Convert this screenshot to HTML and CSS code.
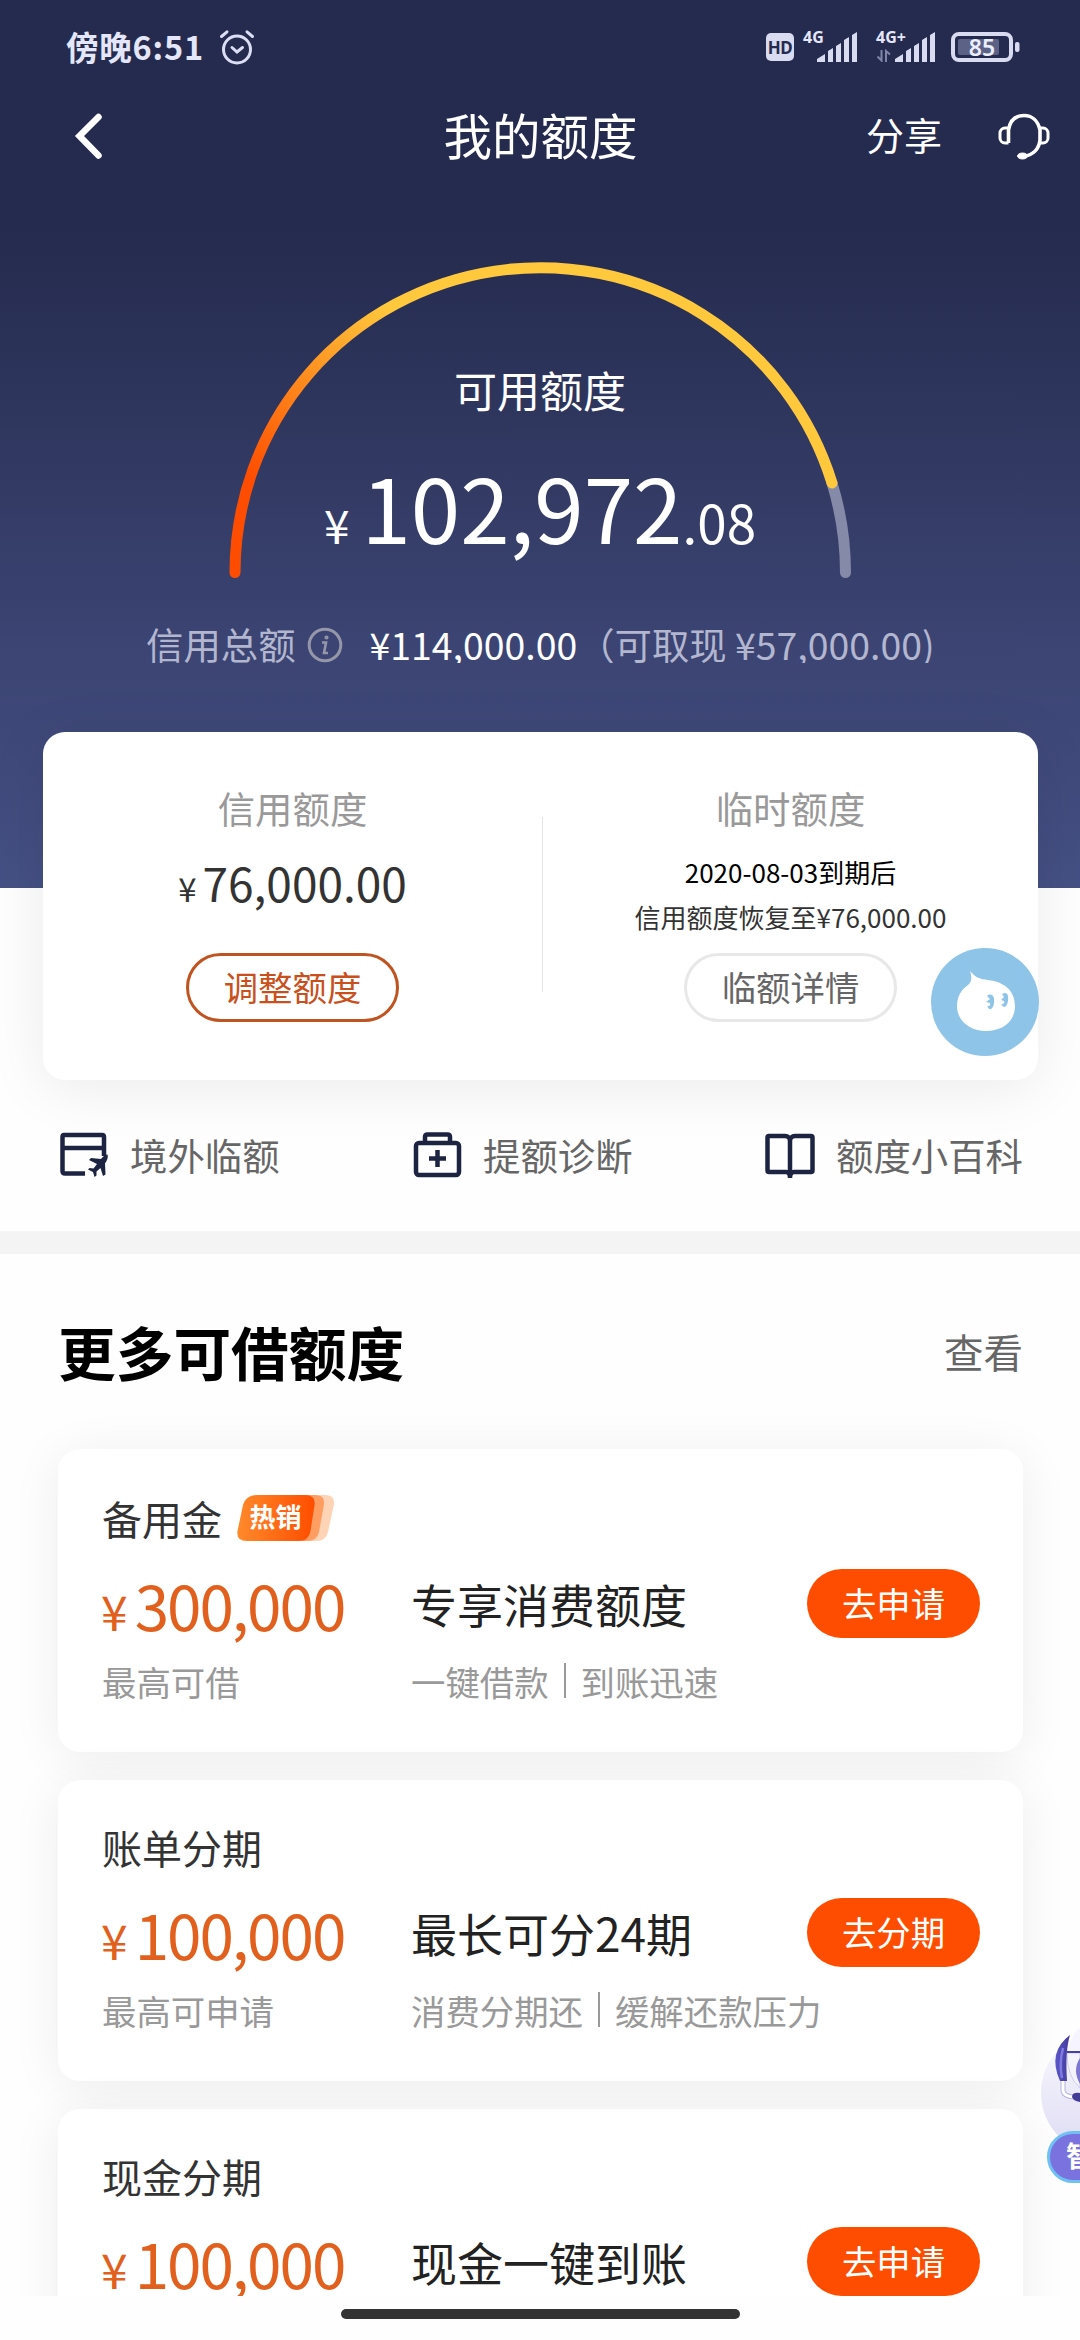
FILE: index.html
```html
<!DOCTYPE html>
<html lang="zh-CN">
<head>
<meta charset="utf-8">
<title>我的额度</title>
<link rel="stylesheet" href="styles.css">
</head>
<body>
<div class="screen">
  <header class="hero">
    <div class="status">
      <div class="status-left">
        <span class="clock">傍晚6:51</span>
        <svg class="alarm" width="36" height="36" viewBox="0 0 36 36" fill="none" stroke="#dcdef3" stroke-width="3" stroke-linecap="round">
          <circle cx="18" cy="20.500" r="13.500"/><path d="M13 18.500l5 4.500 5.500-4.500M2.500 7.500L8 2.800M33.500 7.500L28 2.800"/>
        </svg>
      </div>
      <div class="status-right">
        <span class="hd">HD</span>
        <span class="signal signal-one"><span class="net">4G</span>
          <svg width="55" height="30" viewBox="0 0 55 30" fill="#d9dbf0"><path d="M14 30v-3l8-5v8zM25 30V19l5-3v14zM33 30V14l5-3v19zM41 30V8l5-3v25zM49 30V3l5-3v30z"/></svg>
        </span>
        <span class="signal signal-two"><span class="net">4G+</span>
          <svg width="60" height="30" viewBox="0 0 60 30" fill="#d9dbf0"><path d="M19 30v-3l8-5v8zM30 30V19l5-3v14zM38 30V14l5-3v19zM46 30V8l5-3v25zM54 30V3l5-3v30z"/><path d="M5.500 18v10.500l-4-4M10 30V19l4 3.500" fill="none" stroke="#8085a8" stroke-width="2"/></svg>
        </span>
        <svg class="battery" width="70" height="30" viewBox="0 0 70 30">
          <rect x="2" y="2" width="58" height="26" rx="6" fill="none" stroke="#d9dbf0" stroke-width="4"/>
          <rect x="7" y="7" width="41" height="16" rx="2" fill="#5c6285"/>
          <rect x="64" y="10" width="4.500" height="10" rx="2" fill="#d9dbf0"/>
          <text x="31" y="23.500" text-anchor="middle">85</text>
        </svg>
      </div>
    </div>
    <nav class="nav">
      <svg class="back" width="30" height="46" viewBox="0 0 30 46" fill="none" stroke="#fff" stroke-width="6.500" stroke-linecap="round" stroke-linejoin="miter"><path d="M24.500 4L5.500 23l19 19.500"/></svg>
      <h1 class="nav-title">我的额度</h1>
      <div class="nav-actions">
        <span class="share">分享</span>
        <svg width="52" height="48" viewBox="0 0 52 48" fill="none" stroke="#fff" stroke-width="3" stroke-linejoin="round">
          <path d="M10.500 31V18C12 8 18 3.500 26 3.500S40 9 42 18v10c-1 9-7 15-16 16.500" stroke-width="3.600"/>
          <path d="M10.500 16H7a5 5 0 0 0-5 5v5a5 5 0 0 0 5 5h3.500M42.500 16H45a5 5 0 0 1 5 5v5a5 5 0 0 1-5 5h-3.500"/>
          <ellipse cx="24.500" cy="44" rx="5" ry="3" fill="#fff" stroke-width="1"/>
        </svg>
      </div>
    </nav>
    <section class="gauge">
      <svg class="gauge-arc" width="622" height="317" viewBox="229 262 622 317" fill="none" stroke-width="11" stroke-linecap="round">
        <defs><linearGradient id="arc" gradientUnits="userSpaceOnUse" x1="255" y1="480" x2="378" y2="300"><stop offset="0" stop-color="#ff4d00"/><stop offset="1" stop-color="#ffc83d"/></linearGradient></defs>
        <path d="M832 483A305.250 305 0 0 1 845.500 572.500" stroke="#858aa9"/>
        <path d="M235 572.500A305.250 305 0 0 1 832 483" stroke="url(#arc)"/>
      </svg>
      <div class="gauge-text">
        <div class="gauge-label">可用额度</div>
        <div class="gauge-amount"><span class="cur">¥</span><span class="int">102,972</span><span class="dec">.08</span></div>
      </div>
    </section>
    <div class="totals">
      <span>信用总额</span>
      <svg class="info" width="36" height="36" viewBox="0 0 36 36" fill="none" stroke="#9597a9" stroke-width="3"><circle cx="18" cy="18" r="15.800"/><path d="M15 15.500h4l-2 10.500h4" stroke-width="2.600"/><circle cx="19.500" cy="10.500" r="1.200" stroke-width="1.800"/></svg>
      <span class="total-value">¥114,000.00</span>
      <span class="cash">（可取现 ¥57,000.00)</span>
    </div>
  </header>

  <section class="limits">
    <div class="limit">
      <div class="limit-title">信用额度</div>
      <div class="limit-amount"><span class="cur">¥</span>76,000.00</div>
      <div class="pill pill-accent">调整额度</div>
    </div>
    <div class="rule"></div>
    <div class="limit">
      <div class="limit-title">临时额度</div>
      <div class="limit-note"><div class="due">2020-08-03到期后</div><div>信用额度恢复至¥76,000.00</div></div>
      <div class="pill">临额详情</div>
    </div>
  </section>

  <section class="links">
    <div class="link">
      <svg width="49" height="46" viewBox="0 0 49 46" fill="none" stroke="#1d2442" stroke-width="4.500"><path d="M44 24V5q0-2-2-2H4Q2.500 3 2.500 5v34q0 2.500 2.500 2.500H25M2 16h42"/><path d="M47.500 22.500c-2 0-4.500 2-6.500 4.500l-10-1-2 2 8 4-3.500 4.500-4-.5-1.500 1.500 5 2.500 1.500 5 2-1.500v-4l4-3.500 2.500 8 2.500-1.500-.5-11c2-3 3.500-6 2.500-9z" fill="#1d2442" stroke="none"/></svg>
      <span>境外临额</span>
    </div>
    <div class="link">
      <svg width="49" height="46" viewBox="0 0 49 46" fill="none" stroke="#1d2442" stroke-width="4.500"><rect x="3" y="11" width="43" height="32" rx="3"/><path d="M12 11V5q0-2.500 2.500-2.500h20Q37 2.500 37 5v6M24.500 18v17M16 26.500h17"/></svg>
      <span>提额诊断</span>
    </div>
    <div class="link">
      <svg width="50" height="46" viewBox="0 0 50 46" fill="none" stroke="#1d2442" stroke-width="4.500" stroke-linejoin="round"><path d="M25 9c0-3-2-5-5-5H4Q2.500 4 2.500 5.500v33Q2.500 40 4 40h17c3 0 4 2 4 6V9c0-3 2-5 5-5h16q1.500 0 1.500 1.500v33q0 1.500-1.500 1.500H29c-3 0-4 2-4 6"/></svg>
      <span>额度小百科</span>
    </div>
  </section>

  <div class="band"></div>

  <section class="more">
    <div class="more-head"><h2>更多可借额度</h2><span>查看</span></div>
    <article class="offer offer-first">
      <div class="offer-name">备用金
        <svg class="hot" width="98" height="46" viewBox="0 0 98 46">
          <defs><linearGradient id="hot"><stop offset="0" stop-color="#ff8a2b"/><stop offset="1" stop-color="#ff4d00"/></linearGradient></defs>
          <path d="M32 0h56q10 0 9 9l-6 28q-2 9-12 9H26z" fill="#ffd3b5"/>
          <path d="M24 0h54q10 0 9 9l-5 28q-2 9-12 9H18z" fill="#ff9e62"/>
          <path d="M20 0h48q11 0 9.500 10l-4 26q-1.500 10-12 10H10Q-1 46 .500 36L6 10Q9 0 20 0z" fill="url(#hot)"/>
          <text x="38.500" y="31.500" text-anchor="middle">热销</text>
        </svg>
      </div>
      <div class="offer-amount"><span class="cur">¥</span>300,000</div>
      <div class="offer-lead">专享消费额度</div>
      <div class="offer-btn">去申请</div>
      <div class="offer-sub">最高可借</div>
      <div class="offer-tags"><span>一键借款</span><span>到账迅速</span></div>
    </article>
    <article class="offer">
      <div class="offer-name">账单分期</div>
      <div class="offer-amount"><span class="cur">¥</span>100,000</div>
      <div class="offer-lead">最长可分24期</div>
      <div class="offer-btn">去分期</div>
      <div class="offer-sub">最高可申请</div>
      <div class="offer-tags"><span>消费分期还</span><span>缓解还款压力</span></div>
    </article>
    <article class="offer">
      <div class="offer-name">现金分期</div>
      <div class="offer-amount"><span class="cur">¥</span>100,000</div>
      <div class="offer-lead">现金一键到账</div>
      <div class="offer-btn">去申请</div>
    </article>
  </section>

  <footer class="home"><div class="home-bar"></div></footer>

  <svg class="pet" width="108" height="108" viewBox="0 0 108 108">
    <circle cx="54" cy="54" r="54" fill="#8ec4e7"/>
    <path d="M39 23c6 7 10 8 18 9 17 2 27 11 27 26 0 16-13 25-29 25S26 73 26 58c0-10 5-17 11-21 4-3 4-8 2-14z" fill="#fff"/>
    <path d="M56 48c5-4 8 1 7 7-1 7-5 8-7 3 2 1 4-1 3-3l-4-1 4-3zM71 46c5-3 7 1 6 7-1 6-4 8-7 3 2 1 4-1 3-3l-3-1 3-3z" fill="#8ec4e7"/>
  </svg>

  <div class="bot">
    <svg width="39" height="130" viewBox="0 0 39 130">
      <defs>
        <linearGradient id="halo" x1="0" y1="0" x2="0" y2="1"><stop offset="0" stop-color="#faf9fe"/><stop offset="1" stop-color="#dddbf3"/></linearGradient>
        <linearGradient id="ear"><stop offset="0" stop-color="#5a55cc"/><stop offset="1" stop-color="#423b98"/></linearGradient>
      </defs>
      <circle cx="62" cy="77" r="62" fill="url(#halo)"/>
      <path d="M39 12Q30 18 27 36l12 1z" fill="#f6f4ff"/>
      <path d="M26 37h13v35Q26 61 26 37z" fill="#f4f2fd" stroke="#cfcbee" stroke-width="1"/>
      <path d="M39 42q-8 12 0 26z" fill="#7b77d2"/>
      <path d="M29 19Q24 35 26 65h-7Q6 36 29 19z" fill="url(#ear)"/>
      <path d="M22 32q-4 16-1 30" fill="none" stroke="#817be0" stroke-width="2.500"/>
      <path d="M26 36h13" stroke="#4740a5" stroke-width="2"/>
      <path d="M22 65v10q1 5 10 6" fill="none" stroke="#b6b2df" stroke-width="5"/>
      <path d="M22 65v10q1 5 10 6" fill="none" stroke="#fff" stroke-width="3"/>
      <path d="M39 77q-8-1-8 4 1 4 8 5z" fill="#423b98"/>
    </svg>
    <div class="bot-label">智</div>
  </div>
</div>
</body>
</html>
```
FILE: styles.css
```css
* { box-sizing: border-box; }

body {
  margin: 0;
  background: #fefefe;
  font-family: "Noto Sans CJK SC", "Noto Sans", sans-serif;
  font-weight: 400;
  color: #333;
}

h1, h2 { margin: 0; }

.screen {
  position: relative;
  width: 1080px;
  height: 2340px;
  overflow: hidden;
  display: flex;
  flex-direction: column;
}

.screen svg { flex: none; display: block; }

/* Hero */
.hero {
  flex: none;
  height: 888px;
  background: linear-gradient(#252b4e 0, #252b4e 230px, #3b4472 640px, #455084 888px);
  color: #fff;
}

.status {
  display: flex;
  justify-content: space-between;
  height: 94px;
  padding: 0 59px 0 66px;
}

.status-left { display: flex; align-items: center; gap: 15px; }

.clock {
  margin-top: -2px;
  font-size: 32.500px;
  font-weight: 700;
  line-height: 40px;
  letter-spacing: 0.8px;
  color: #e4e6fa;
}

.status-right { display: flex; align-items: center; }

.hd {
  width: 28px;
  height: 28px;
  border-radius: 5px;
  background: #d9dbf0;
  color: #252b4e;
  font: 700 17px/30px "Noto Sans", sans-serif;
  text-align: center;
  letter-spacing: -0.5px;
}

.signal { display: grid; height: 30px; }
.signal > * { grid-area: 1 / 1; }
.signal-one { margin-left: 9px; }
.signal-two { margin-left: 18px; }
.net {
  margin-top: -3px;
  font: 700 16px/16px "Noto Sans", sans-serif;
  color: #e4e6fa;
}
.battery { margin-left: 15px; overflow: visible; }
.battery text { font: 600 23px "Noto Sans", sans-serif; fill: #eceefc; }

.nav {
  display: grid;
  grid-template-columns: 1fr auto 1fr;
  align-items: center;
  height: 84px;
  padding: 0 30px 0 74px;
}
.nav-title {
  margin: -4px 0 0 -43px;
  font-size: 48.500px;
  font-weight: 400;
  line-height: 64px;
}
.nav-actions { display: flex; justify-content: flex-end; align-items: center; gap: 56px; }
.share { font-size: 38px; line-height: 50px; margin-top: -4px; }

.gauge { display: grid; justify-content: center; margin-top: 84px; height: 316px; }
.gauge > * { grid-area: 1 / 1; }
.gauge-arc { overflow: visible; }
.gauge-text { padding-top: 97px; text-align: center; }
.gauge-label { font-size: 43px; line-height: 60px; }
.gauge-amount {
  display: flex;
  align-items: baseline;
  justify-content: center;
  margin-top: 37px;
  line-height: 100px;
}
.gauge-amount .cur { font-size: 46px; margin-right: 12px; }
.gauge-amount .int { font-size: 89px; }
.gauge-amount .dec { font-size: 53px; }

.totals {
  display: flex;
  height: 43px;
  margin: 42px 0 0 146px;
  overflow: hidden;
  font-size: 37.400px;
  line-height: 48px;
  color: #b3b6cf;
  white-space: pre;
}
.info { margin: 7px 0 0 11px; }
.total-value { margin-left: 27px; color: #fff; }
.cash { margin-left: 0; }

/* Limit summary */
.limits {
  position: relative;
  flex: none;
  display: grid;
  grid-template-columns: 499px 1px 1fr;
  width: 995px;
  height: 348px;
  margin: -156px 0 0 43px;
  padding-top: 51px;
  border-radius: 22px;
  background: #fff;
  box-shadow: 0 8px 60px rgba(0, 0, 0, 0.08);
}
.limit { display: flex; flex-direction: column; align-items: center; }
.limit-title { font-size: 37.400px; line-height: 50px; color: #999; }
.limit-amount { height: 60px; margin-top: 19px; font-size: 46px; line-height: 60px; }
.limit-amount .cur { font-size: 33px; line-height: 1; margin-right: 6px; }
.limit-note { margin: 16px 0 14px; font-size: 26px; line-height: 45px; text-align: center; }
.due { color: #000; }
.pill {
  width: 213px;
  height: 69px;
  border: 3px solid #e8e8e8;
  border-radius: 35px;
  font-size: 34.400px;
  line-height: 61px;
  text-align: center;
  color: #666;
}
.pill-accent { margin-top: 41px; border-color: #c05420; color: #c9501c; }
.rule { height: 175px; margin-top: 34px; background: #e4e4e4; }

/* Shortcuts */
.links {
  flex: none;
  display: grid;
  grid-template-columns: 353px 352px auto;
  align-items: center;
  height: 151px;
  padding: 0 0 2px 60px;
}
.link { display: flex; align-items: center; gap: 21px; font-size: 37.400px; line-height: 48px; color: #666; }
.band { flex: none; height: 23px; background: #f4f4f4; }

/* Offers */
.more {
  flex: none;
  height: 1042px;
  padding: 0 57px 0 58px;
  overflow: hidden;
}
.more-head {
  display: flex;
  justify-content: space-between;
  align-items: center;
  height: 195px;
  padding-bottom: 2px;
  font-size: 39.500px;
  color: #666;
}
.more-head h2 { font-size: 57.700px; line-height: 80px; font-weight: 700; color: #000; }
.offer {
  display: grid;
  grid-template-columns: 309px minmax(0, 1fr) 173px;
  grid-template-rows: 56px 111px 48px;
  align-items: start;
  height: 301px;
  margin-bottom: 28px;
  padding: 39px 43px 0 44px;
  border-radius: 22px;
  background: #fff;
  box-shadow: 0 6px 50px rgba(0, 0, 0, 0.07);
}
.offer-first { height: 303px; padding-top: 41px; }
.offer-name { grid-column: 1 / -1; display: flex; align-items: center; gap: 15px; font-size: 40px; line-height: 56px; }
.hot text { font-size: 26px; font-weight: 700; fill: #fff; }
.offer-amount { height: 84px; margin: 16px 0 0 -1px; font-size: 62px; line-height: 84px; letter-spacing: -2px; color: #e2601e; }
.offer-amount .cur { font-size: 48px; line-height: 1; margin-right: 9px; }
.offer-lead { font-size: 46px; line-height: 60px; margin-top: 27px; white-space: nowrap; color: #222; }
.offer-btn {
  width: 173px;
  height: 69px;
  margin-top: 23px;
  border-radius: 35px;
  background: #ff4d00;
  color: #fff;
  font-size: 34.400px;
  line-height: 67px;
  text-align: center;
}
.offer-sub, .offer-tags { font-size: 34.400px; line-height: 48px; color: #999; }
.offer-tags { display: flex; align-items: center; white-space: nowrap; }
.offer-tags span + span {
  margin-left: 15px;
  padding-left: 17px;
  background: linear-gradient(#999, #999) 0 6px / 2px 35px no-repeat;
}

.home { flex: none; display: flex; justify-content: center; padding-top: 13px; }
.home-bar { width: 399px; height: 10px; border-radius: 5px; background: #333; }

/* Floating helpers */
.pet { position: absolute; left: 931px; top: 948px; }
.bot { position: absolute; left: 1041px; top: 2016px; width: 39px; height: 170px; overflow: hidden; }
.bot-label {
  position: absolute;
  left: 6px;
  top: 115px;
  width: 140px;
  height: 52px;
  padding-left: 16px;
  border: 3px solid #6fc1f3;
  border-radius: 27px;
  background: #7a72df;
  color: #fff;
  font-size: 28px;
  line-height: 43px;
  font-weight: 700;
}
```
